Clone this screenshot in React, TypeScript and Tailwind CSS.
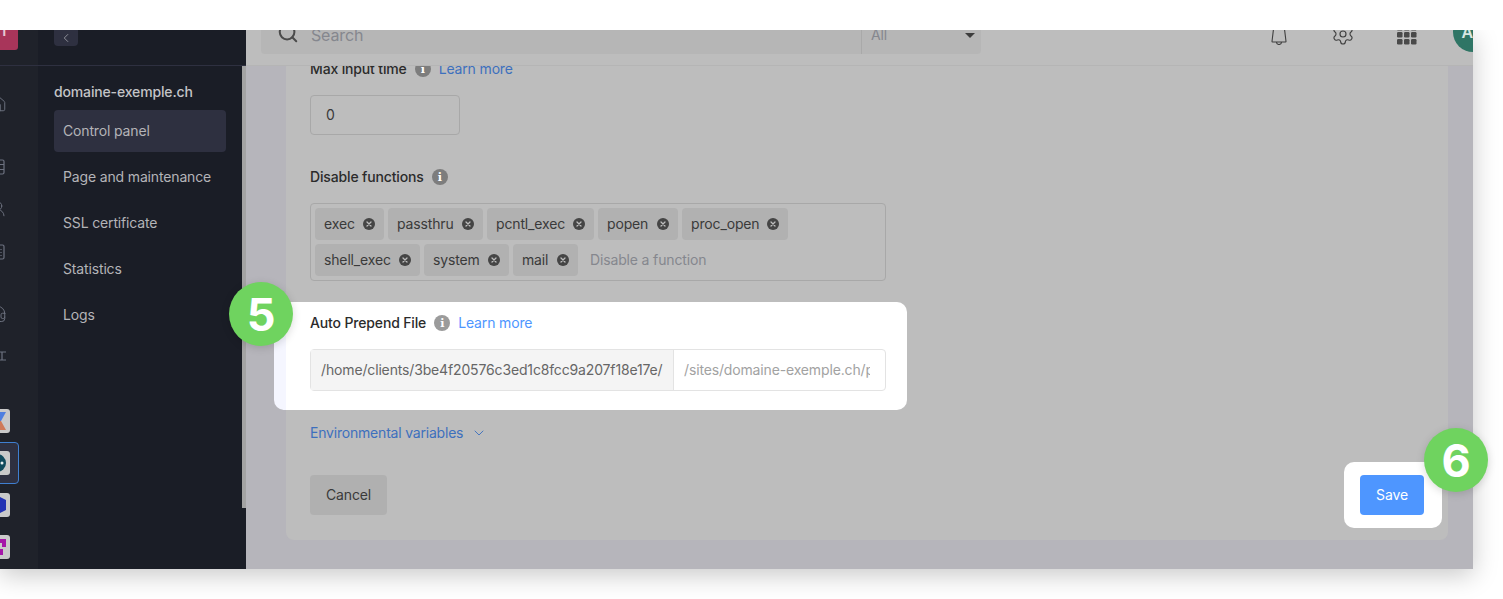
import { ChevronDown, ChevronLeft, Home, Search, Settings, UserRound, Headset } from "lucide-react";

const sideLinks = ["Page and maintenance", "SSL certificate", "Statistics", "Logs"];
const tagRows = [
  [
    { name: "exec", w: "w-[69px]" },
    { name: "passthru", w: "w-[95px]" },
    { name: "pcntl_exec", w: "w-[107px]" },
    { name: "popen", w: "w-[80px]" },
    { name: "proc_open", w: "w-[106px]" },
  ],
  [
    { name: "shell_exec", w: "w-[105px]" },
    { name: "system", w: "w-[85px]" },
    { name: "mail", w: "w-[65px]" },
  ],
];

function InfoDot({ dim }: { dim?: boolean }) {
  return (
    <span
      className={`flex h-4 w-4 shrink-0 items-center justify-center rounded-full text-[11px] leading-none font-bold text-white ${
        dim ? "bg-[#7d7d7d]" : "bg-[#9b9b9b]"
      }`}
      style={{ fontFamily: "'DejaVu Serif', serif" }}
    >
      i
    </span>
  );
}

function Tag({ name, w }: { name: string; w: string }) {
  return (
    <span className={`flex h-8 ${w} items-center justify-between rounded bg-[#b1b1b1] pr-[9px] pl-[9px] text-[#3a3a3a]`}>
      {name}
      <svg width="12" height="12" viewBox="0 0 12 12" className="shrink-0">
        <circle cx="6" cy="6" r="6" fill="#454545" />
        <path d="M4 4l4 4M8 4l-4 4" stroke="#bdbdbd" strokeWidth="1.3" strokeLinecap="round" />
      </svg>
    </span>
  );
}

function Badge({ n, className }: { n: string; className: string }) {
  return (
    <span
      className={`absolute z-30 flex h-16 w-16 items-center justify-center rounded-full bg-[#6fd35f] text-[45px] leading-none font-bold text-white shadow-[0_2px_8px_rgba(0,0,0,0.15)] ${className}`}
    >
      {n}
    </span>
  );
}

function RailTile({ children }: { children: React.ReactNode }) {
  return <div className="h-6 w-6 overflow-hidden rounded-[3px] bg-[#c9c9c9] p-[2px]">{children}</div>;
}

function Rail() {
  const iconClass = "ml-[-11px] shrink-0 text-[#6d7280]";
  return (
    <aside className="flex w-[38px] shrink-0 flex-col overflow-hidden bg-[#1f222a]">
      <div className="h-[36px] shrink-0 border-b border-[#2e3040]">
        <div className="-mt-[10px] ml-[-20px] flex h-[30px] w-[38px] items-start justify-end rounded-[3px] bg-[#a8355a] pt-[5px] pr-[12px] text-[13px] leading-none font-bold text-[#e6c9d2]">
          1
        </div>
      </div>
      <Home size={18} strokeWidth={1.3} className={`mt-[29px] ${iconClass}`} />
      <svg width="18" height="18" viewBox="0 0 18 18" fill="none" stroke="currentColor" strokeWidth="1.2" className={`mt-[45px] ${iconClass}`}>
        <rect x="2" y="2" width="13" height="14" rx="1.5" />
        <path d="M2 6.5h13M2 11.5h13" />
      </svg>
      <UserRound size={18} strokeWidth={1.3} className={`mt-[24px] ${iconClass}`} />
      <svg width="18" height="18" viewBox="0 0 18 18" fill="none" stroke="currentColor" strokeWidth="1.2" className={`mt-[25px] ${iconClass}`}>
        <rect x="2" y="2" width="13" height="14" rx="1.5" />
        <path d="M12 6v1M12 9v1M12 12v1" />
      </svg>
      <Headset size={18} strokeWidth={1.3} className={`mt-[44px] ${iconClass}`} />
      <svg width="18" height="18" viewBox="0 0 18 18" fill="none" stroke="currentColor" strokeWidth="1.2" className={`mt-[24px] ${iconClass}`}>
        <path d="M3 5h14M3 13h14M13 5v8" />
      </svg>
      <div className="mt-[44px] ml-[-14px]">
        <RailTile>
          <svg viewBox="0 0 20 20" className="h-5 w-5">
            <path d="M10 1H18L13 10H10z" fill="#4f7fe0" />
            <path d="M10 10H13L18 19H10z" fill="#cf7a58" />
          </svg>
        </RailTile>
      </div>
      <div className="mt-[9px] -ml-[15px] flex h-[42px] w-[34px] shrink-0 items-center rounded border border-[#3f7fd0] bg-[#2e3040]">
        <RailTile>
          <svg viewBox="0 0 20 20" className="h-5 w-5">
            <circle cx="9" cy="10" r="9" fill="#0f4a5c" />
            <circle cx="14" cy="10" r="1.5" fill="#e8f0f0" />
          </svg>
        </RailTile>
      </div>
      <div className="mt-[9px] ml-[-14px]">
        <RailTile>
          <svg viewBox="0 0 20 20" className="h-5 w-5">
            <path d="M10 1l8 4v10l-8 4-8-4V5z" fill="#2333b4" />
          </svg>
        </RailTile>
      </div>
      <div className="mt-[18px] ml-[-14px]">
        <RailTile>
          <svg viewBox="0 0 20 20" className="h-5 w-5">
            <path d="M10 2H18V10H14V6H10zM10 12H15V18H10z" fill="#a516a8" />
          </svg>
        </RailTile>
      </div>
    </aside>
  );
}

function Sidebar() {
  return (
    <aside className="relative flex w-[208px] shrink-0 flex-col bg-[#1a1d26] text-[#b4b4b8]">
      <div className="h-[36px] shrink-0 border-b border-[#2e3040] pl-4">
        <div className="flex h-4 w-6 items-center justify-center rounded-b bg-[#2e3040] text-[#9a9ba3]">
          <ChevronLeft size={14} strokeWidth={1.5} />
        </div>
      </div>
      <div className="pl-4">
        <div className="w-[172px]">
          <p className="mt-[16px] h-5 leading-5 font-medium text-[#c4c4c6]">domaine-exemple.ch</p>
          <p className="mt-[8px] flex h-[42px] items-center rounded bg-[#2e3040] pl-[9px]">Control panel</p>
          {sideLinks.map((link) => (
            <p key={link} className="mt-1 flex h-[42px] items-center pl-[9px]">
              {link}
            </p>
          ))}
        </div>
      </div>
      <div className="absolute top-[36px] right-0 h-[442px] w-1 bg-[#a3a3a3]" />
    </aside>
  );
}

function TopBar() {
  return (
    <header className="relative z-10 flex h-[36px] shrink-0 items-end overflow-hidden border-b border-[#b5b5b5] bg-[#bdbdbd] pb-[11px] pl-[15px]">
      <div className="flex h-[38px] w-[720px] shrink-0 items-center rounded bg-[#b6b6b6]">
        <Search size={22} strokeWidth={2.2} className="mb-1 ml-4 shrink-0 text-[#4b4b4b]" />
        <span className="ml-3 w-[550px] text-base text-[#85878e]">Search</span>
        <div className="flex h-full w-[120px] items-center justify-between border-l border-[#a9a9a9] pr-[6px] pl-[9px] text-[#85878e]">
          All
          <span className="h-0 w-0 border-x-[5px] border-t-[5px] border-x-transparent border-t-[#3d3d3d]" />
        </div>
      </div>
      <svg width="18" height="16" viewBox="0 0 18 16" fill="none" stroke="#3f3f3f" strokeWidth="1.1" className="mb-[9px] ml-[289px] shrink-0">
        <path d="M3.5 0L2 12.5q0 .5 .5 .5H15.5q.5 0 .5-.5L14.5 0" />
        <path d="M6.5 13a2.5 2.5 0 0 0 5 0" />
      </svg>
      <Settings size={24} strokeWidth={1.15} className="mb-[8px] ml-[43px] shrink-0 text-[#3f3f3f]" />
      <svg width="22" height="22" viewBox="0 0 22 22" className="mb-[8px] ml-[41px] shrink-0 fill-[#4a4a4a]">
        <rect x="1" y="1" width="5.5" height="5.5" rx="1.2" />
        <rect x="8" y="1" width="5.5" height="5.5" rx="1.2" />
        <rect x="15" y="1" width="5.5" height="5.5" rx="1.2" />
        <rect x="1" y="8" width="5.5" height="5.5" rx="1.2" />
        <rect x="8" y="8" width="5.5" height="5.5" rx="1.2" />
        <rect x="15" y="8" width="5.5" height="5.5" rx="1.2" />
        <rect x="1" y="15" width="5.5" height="5.5" rx="1.2" />
        <rect x="8" y="15" width="5.5" height="5.5" rx="1.2" />
        <rect x="15" y="15" width="5.5" height="5.5" rx="1.2" />
      </svg>
      <div className="mb-[2px] ml-[35px] flex h-10 w-10 shrink-0 items-center justify-center rounded-full bg-[#2f7565] text-base font-semibold text-[#d8e6e2]">
        AA
      </div>
    </header>
  );
}

export default function App() {
  return (
    <div
      className="h-[599px] w-[1503px] overflow-hidden bg-white text-sm tracking-[-0.15px]"
      style={{ fontFamily: "Inter, 'Liberation Sans', sans-serif" }}
    >
      <div className="relative z-20 h-[30px] bg-white" />
      <div className="flex h-[539px] w-[1473px] bg-[#b6b5bb] shadow-[0_6px_24px_rgba(0,0,0,0.22)]">
        <Rail />
        <Sidebar />
        <main className="flex min-w-0 flex-1 flex-col">
          <TopBar />
          <div className="-mt-[7px] ml-[40px] w-[1162px] rounded-lg bg-[#bdbdbd] pr-6 pb-[25px] pl-6 text-[#2b2b2b]">
            <div className="flex h-5 items-center gap-2">
              <span className="font-medium">Max input time</span>
              <InfoDot dim />
              <a className="text-[#3d70bd]">Learn more</a>
            </div>
            <div className="mt-4 flex h-10 w-[150px] items-center rounded border border-[#a8a8a8] pl-[15px] text-[#3a3a3a]">0</div>

            <div className="mt-8 flex h-5 items-center gap-2">
              <span className="font-medium">Disable functions</span>
              <InfoDot dim />
            </div>
            <div className="mt-4 flex h-[78px] w-[576px] flex-col gap-1 rounded border border-[#a8a8a8] pt-1 pl-1">
              {tagRows.map((row, i) => (
                <div key={i} className="flex gap-1">
                  {row.map((tag) => (
                    <Tag key={tag.name} {...tag} />
                  ))}
                  {i === 1 && <span className="ml-2 flex items-center text-[#85878e]">Disable a function</span>}
                </div>
              ))}
            </div>

            <section className="relative z-20 mt-[21px] -ml-9 w-[633px] rounded-[10px] border-l-[12px] border-[#f5f6ff] bg-white pt-[11px] pr-[21px] pb-[19px] pl-6">
              <Badge n="5" className="top-[-20px] left-[-57px]" />
              <div className="flex h-5 items-center gap-2">
                <span className="font-medium">Auto Prepend File</span>
                <InfoDot />
                <a className="text-[#4e96ff]">Learn more</a>
              </div>
              <div className="mt-4 flex h-[42px] items-center rounded border border-[#e3e3e3]">
                <span className="flex h-full w-[363px] shrink-0 items-center border-r border-[#e3e3e3] bg-[#f4f4f4] pl-[10px] text-[#666]">
                  /home/clients/3be4f20576c3ed1c8fcc9a207f18e17e/
                </span>
                <span className="ml-[10px] w-[186px] overflow-hidden whitespace-nowrap text-[#a2a2a2]">
                  /sites/domaine-exemple.ch/public
                </span>
              </div>
            </section>

            <div className="mt-[13px] flex h-5 items-center gap-2 tracking-[-0.2px] text-[#3d70bd]">
              Environmental variables
              <ChevronDown size={16} strokeWidth={1.4} />
            </div>

            <div className="mt-8 flex items-center justify-between">
              <button className="h-10 w-[77px] rounded bg-[#b0b0b0] text-[#3a3a3a]">Cancel</button>
              <div className="relative z-20 -my-[13px] -mr-[18px] rounded-[10px] bg-white py-[13px] pr-[18px] pl-4">
                <Badge n="6" className="top-[-34px] left-[80px]" />
                <button className="block h-10 w-16 rounded bg-[#4e96ff] text-white">Save</button>
              </div>
            </div>
          </div>
        </main>
      </div>
    </div>
  );
}
